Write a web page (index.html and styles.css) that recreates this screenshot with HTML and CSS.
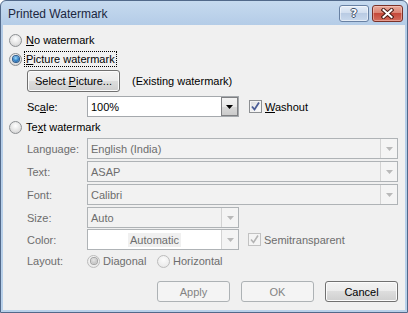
FILE: index.html
```html
<!DOCTYPE html>
<html lang="en">

<head>
    <meta charset="UTF-8" />
    <title>Printed Watermark</title>
    <link rel="stylesheet" href="styles.css">
</head>

<body>
    <div class="window">
        <div class="titlebar">
            <span class="title">Printed Watermark</span>
            <div class="caption-buttons">
                <div class="cap help"><span>?</span></div>
                <div class="cap close">
                    <svg width="13" height="11" viewBox="0 0 13 11">
                        <path d="M2.5 2 L10.5 9 M10.5 2 L2.5 9" stroke="#4a1d17" stroke-width="4" stroke-linecap="square" />
                        <path d="M2.5 2 L10.5 9 M10.5 2 L2.5 9" stroke="#fff" stroke-width="2" stroke-linecap="square" />
                    </svg>
                </div>
            </div>
        </div>

        <div class="client">
            <div class="row opt">
                <span class="radio"></span>
                <span class="lbl"><u>N</u>o watermark</span>
            </div>
            <div class="row opt opt-2">
                <span class="radio on"></span>
                <span class="lbl focus"><u>P</u>icture watermark</span>
            </div>
            <div class="row pic">
                <div class="btn pick"><span>Select <u>P</u>icture...</span></div>
                <span class="note">(Existing watermark)</span>
            </div>
            <div class="row field scale">
                <span class="flabel">Sc<u>a</u>le:</span>
                <div class="combo short">
                    <span class="val">100%</span>
                    <span class="drop">
                        <svg width="7" height="4" viewBox="0 0 7 4"><path d="M0 0h7l-3.5 4z" fill="#000" /></svg>
                    </span>
                </div>
                <span class="check on"><svg width="11" height="11" viewBox="0 0 11 11"><path d="M2 5.5 L4.5 8.5 L9 1.5" fill="none" stroke="#4b5d96" stroke-width="1.8" /></svg></span>
                <span class="clabel"><u>W</u>ashout</span>
            </div>
            <div class="row opt opt-3">
                <span class="radio"></span>
                <span class="lbl">Te<u>x</u>t watermark</span>
            </div>

            <div class="row field dis first">
                <span class="flabel">Language:</span>
                <div class="combo off long">
                    <span class="val">English (India)</span>
                    <span class="drop"><svg width="7" height="4" viewBox="0 0 7 4"><path d="M0 0h7l-3.5 4z" fill="#b9b9b9" /></svg></span>
                </div>
            </div>
            <div class="row field dis">
                <span class="flabel">Text:</span>
                <div class="combo off long">
                    <span class="val">ASAP</span>
                    <span class="drop"><svg width="7" height="4" viewBox="0 0 7 4"><path d="M0 0h7l-3.5 4z" fill="#b9b9b9" /></svg></span>
                </div>
            </div>
            <div class="row field dis">
                <span class="flabel">Font:</span>
                <div class="combo off long">
                    <span class="val">Calibri</span>
                    <span class="drop"><svg width="7" height="4" viewBox="0 0 7 4"><path d="M0 0h7l-3.5 4z" fill="#b9b9b9" /></svg></span>
                </div>
            </div>
            <div class="row field dis">
                <span class="flabel">Size:</span>
                <div class="combo off short">
                    <span class="val">Auto</span>
                    <span class="drop"><svg width="7" height="4" viewBox="0 0 7 4"><path d="M0 0h7l-3.5 4z" fill="#b9b9b9" /></svg></span>
                </div>
            </div>
            <div class="row field dis color-row">
                <span class="flabel">Color:</span>
                <div class="combo off short swatch">
                    <span class="val"><span class="auto">Automatic</span></span>
                    <span class="drop"><svg width="7" height="4" viewBox="0 0 7 4"><path d="M0 0h7l-3.5 4z" fill="#b9b9b9" /></svg></span>
                </div>
                <span class="check on off"><svg width="11" height="11" viewBox="0 0 11 11"><path d="M2 5.5 L4.5 8.5 L9 1.5" fill="none" stroke="#b4b4b4" stroke-width="1.6" /></svg></span>
                <span class="clabel">Semitransparent</span>
            </div>
            <div class="row field dis layout">
                <span class="flabel">Layout:</span>
                <span class="choice">
                    <span class="radio off on"></span>
                    <span>Diagonal</span>
                </span>
                <span class="choice">
                    <span class="radio off"></span>
                    <span>Horizontal</span>
                </span>
            </div>

            <div class="row actions">
                <div class="btn off">Apply</div>
                <div class="btn off">OK</div>
                <div class="btn">Cancel</div>
            </div>
        </div>
    </div>
</body>

</html>
```

FILE: styles.css
```css
* {
    box-sizing: border-box;
}

body {
    margin: 0;
    font-family: "Liberation Sans", Arial, sans-serif;
    font-size: 11px;
    color: #000;
    background: #fff;
}

u {
    text-decoration: underline;
    text-underline-offset: 1px;
}

/* window frame */
.window {
    width: 408px;
    height: 313px;
    border: 1px solid #52698a;
    border-radius: 6px 6px 0 0;
    background: linear-gradient(#c6daef, #b4cce7 24px, #b9d1ea);
    padding: 0 2px 2px;
    display: flex;
    flex-direction: column;
    overflow: hidden;
}

.titlebar {
    height: 24px;
    display: flex;
    align-items: flex-start;
    flex-shrink: 0;
}

.title {
    font-size: 12px;
    line-height: 15px;
    color: #1b2640;
    margin: 6px 0 0 5px;
}

.caption-buttons {
    margin-left: auto;
    margin-top: 4px;
    margin-right: 2px;
    display: flex;
    gap: 3px;
}

.cap {
    height: 17px;
    border-radius: 3px;
    display: flex;
    align-items: center;
    justify-content: center;
}

.help {
    width: 30px;
    border: 1px solid #6881a3;
    background: linear-gradient(#e6eef8, #cfdcee 50%, #b9cbe3 50%, #c9d9ed);
    box-shadow: inset 0 0 0 1px rgba(255, 255, 255, 0.5);
}

.help span {
    font-family: "DejaVu Sans", sans-serif;
    font-weight: bold;
    font-size: 11px;
    line-height: 12px;
    color: #fff;
    text-shadow: 1px 0 0 #3d4f69, -1px 0 0 #3d4f69, 0 1px 0 #3d4f69, 0 -1px 0 #3d4f69;
}

.close {
    width: 31px;
    border: 1px solid #7a3128;
    background: linear-gradient(#e9aa9c, #d9806f 50%, #c5493a 50%, #d46d5d);
    box-shadow: inset 0 0 0 1px rgba(255, 220, 210, 0.45);
}

.close svg {
    display: block;
}

/* client area */
.client {
    flex: 1;
    background: #f0f0f0;
    padding-top: 7px;
    display: flex;
    flex-direction: column;
}

.row {
    display: flex;
    align-items: center;
    flex-shrink: 0;
}

.opt {
    height: 16px;
    padding-left: 6px;
}

.opt-2 {
    margin-top: 3px;
}

.opt-3 {
    margin-top: 2px;
}

.radio {
    width: 13px;
    height: 13px;
    border-radius: 50%;
    border: 1px solid #8c8f92;
    background: radial-gradient(circle at 50% 35%, #ffffff, #e4e4e4 55%, #c9cacb);
    margin-right: 2px;
    display: flex;
    align-items: center;
    justify-content: center;
    flex-shrink: 0;
}

.radio.on::after {
    content: "";
    width: 6px;
    height: 6px;
    border-radius: 50%;
    background: radial-gradient(circle at 45% 35%, #9fdcfb, #2f7ec5 55%, #144f8c);
    box-shadow: 0 0 0 1px #2b5a8c;
}

.radio.off {
    border-color: #bcbcbc;
    background: radial-gradient(circle at 50% 35%, #fbfbfb, #eeeeee 60%, #e2e2e2);
}

.radio.off.on::after {
    background: radial-gradient(circle at 45% 35%, #e6e6e6, #b4b4b4);
    box-shadow: 0 0 0 1px #a3a3a3;
}

.lbl {
    border: 1px solid transparent;
    padding: 0 1px;
    line-height: 14px;
}

.lbl.focus {
    border: 1px dotted #000;
}

/* picture row */
.pic {
    height: 22px;
    margin-top: 3px;
    padding-left: 24px;
}

.btn {
    height: 21px;
    width: 73px;
    border: 1px solid #707070;
    border-radius: 3px;
    background: linear-gradient(#f2f2f2, #ebebeb 50%, #dddddd 50%, #cfcfcf);
    box-shadow: inset 0 0 0 1px #fbfbfb;
    display: flex;
    align-items: center;
    justify-content: center;
}

.btn.pick {
    width: 93px;
    height: 22px;
}

.btn.off {
    border-color: #adb2b5;
    background: #f4f4f4;
    box-shadow: none;
    color: #838383;
}

.note {
    margin-left: 12px;
}

/* field rows */
.field {
    height: 21px;
    padding-left: 24px;
}

.scale {
    margin-top: 4px;
}

.field.dis {
    margin-top: 2px;
    color: #6d6d6d;
}

.field.first {
    margin-top: 3px;
}

.field.color-row {
    margin-top: 1px;
}

.field.layout {
    height: 16px;
    margin-top: 3px;
}

.flabel {
    width: 60px;
    flex-shrink: 0;
}

.combo {
    height: 21px;
    border: 1px solid #a5a9ad;
    background: #fff;
    display: flex;
    align-items: stretch;
}

.combo.short {
    width: 152px;
}

.combo.long {
    width: 311px;
}

.combo .val {
    flex: 1;
    padding-left: 3px;
    display: flex;
    align-items: center;
}

.combo .drop {
    width: 17px;
    border: 1px solid #7f8083;
    background: linear-gradient(#f3f3f3, #e8e8e8 50%, #d9d9d9 50%, #cbcbcb);
    display: flex;
    align-items: center;
    justify-content: center;
}

.combo.off {
    border-color: #afb3b6;
    background: #f2f2f2;
    color: #6d6d6d;
}

.combo.off .drop {
    border: none;
    border-left: 1px solid #d3d3d3;
    background: #f4f4f4;
}

.combo.swatch {
    background: #fff;
}

.combo.swatch .val {
    justify-content: center;
    padding-left: 0;
}

.auto {
    background: #f0f0f0;
    height: 14px;
    line-height: 14px;
    padding: 0 2px;
}

.check {
    width: 13px;
    height: 13px;
    border: 1px solid #8c8f92;
    background: linear-gradient(135deg, #d9dadb, #f6f6f6 70%, #ffffff);
    box-shadow: inset 0 0 0 1px #f4f4f4;
    margin-left: 10px;
    margin-right: 3px;
    display: flex;
    align-items: center;
    justify-content: center;
    flex-shrink: 0;
}

.check svg {
    display: block;
}

.check.off {
    margin-left: 9px;
    border-color: #c2c2c2;
    background: #f4f4f4;
}

.choice {
    display: flex;
    align-items: center;
    width: 70px;
}

.choice .radio {
    margin-right: 3px;
}

/* bottom buttons */
.actions {
    margin-top: 12px;
    height: 21px;
    justify-content: flex-end;
    padding-right: 7px;
    gap: 11px;
}
```
